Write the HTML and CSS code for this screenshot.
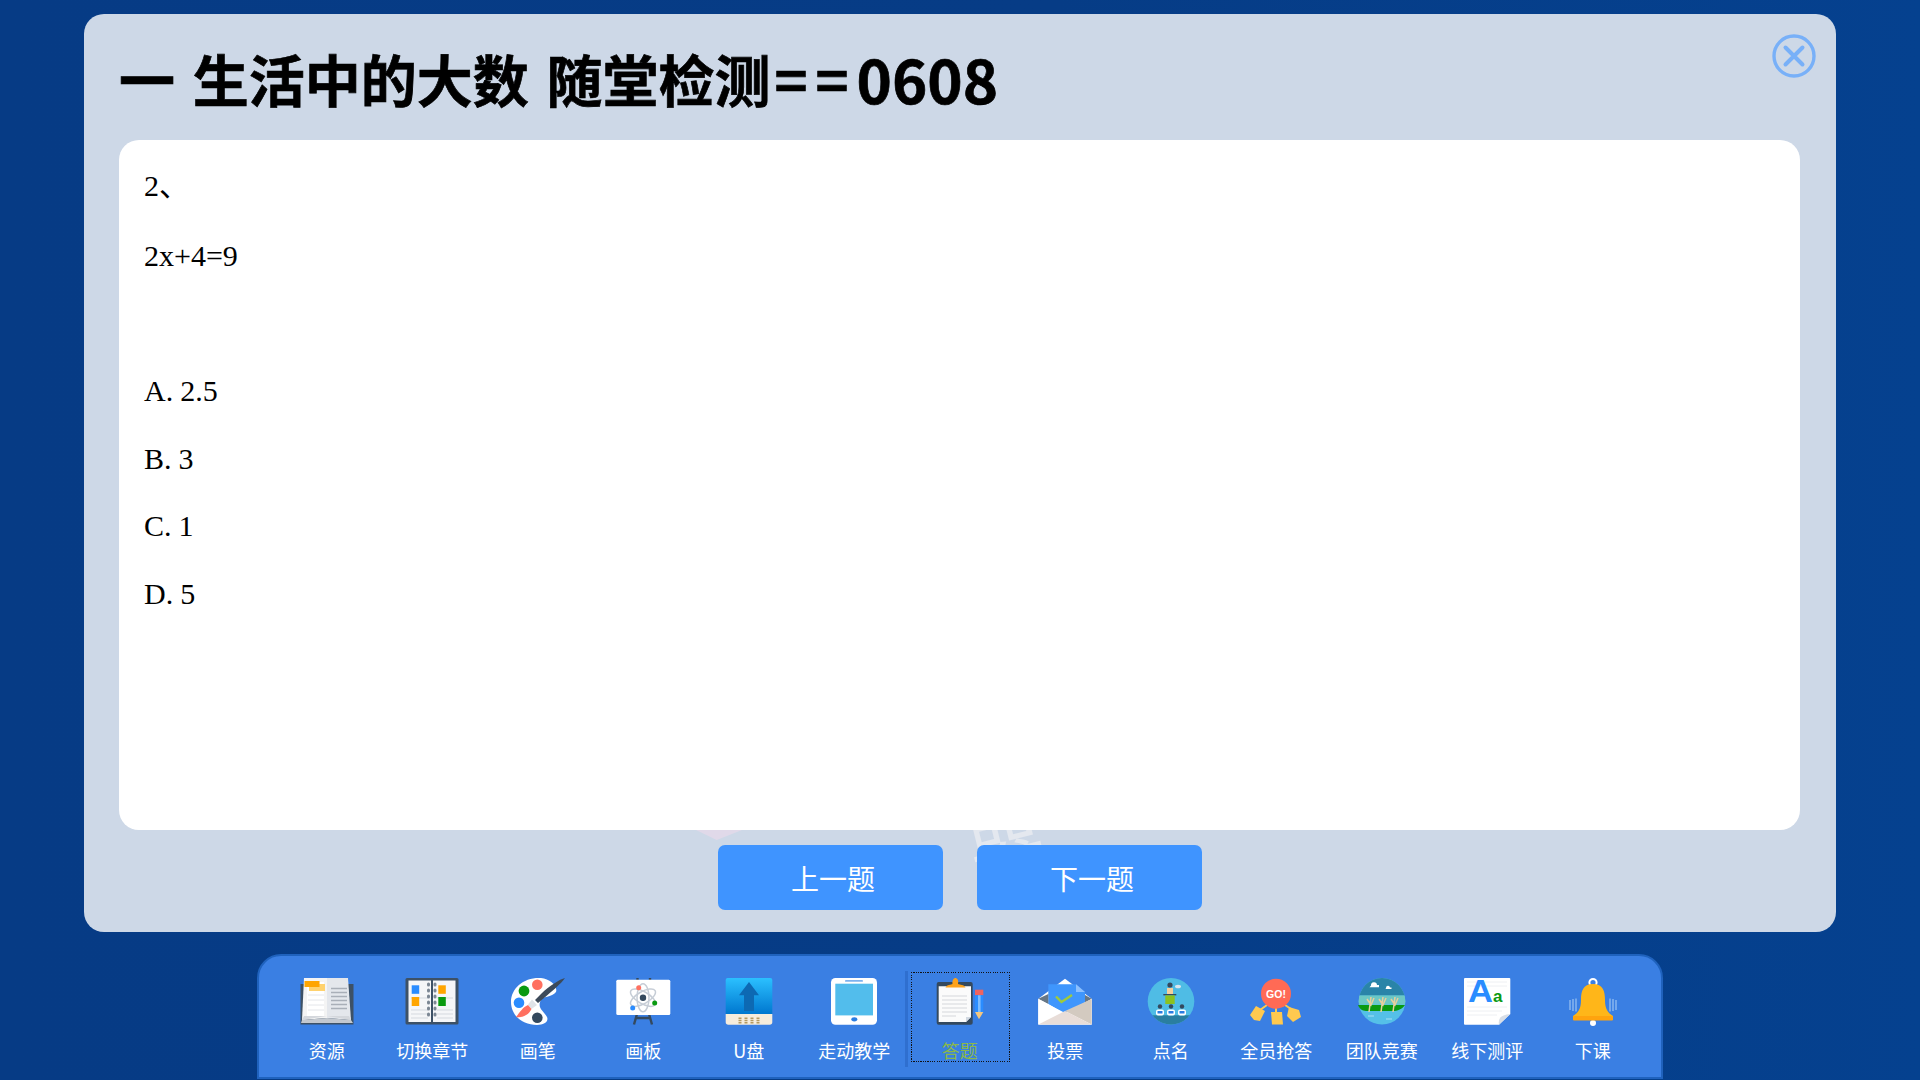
FILE: index.html
```html
<!DOCTYPE html>
<html lang="zh-CN">
<head>
<meta charset="utf-8">
<title>随堂检测</title>
<link rel="stylesheet" href="styles.css">
</head>
<body>
<div class="stage">
  <section class="panel">
    <div class="watermark wm-a"></div>
    <div class="watermark wm-b">器</div>
    <svg class="close" viewBox="0 0 44 44" width="44" height="44"><circle cx="22" cy="22" r="20" fill="none" stroke="#78b0f8" stroke-width="3.400"/><path d="M13.500 13.500 30.500 30.500M30.500 13.500 13.500 30.500" stroke="#78b0f8" stroke-width="4" stroke-linecap="round"/></svg>
    <h1 class="title">一 生活中的大数 随堂检测<span class="eq">==</span><span class="num">0608</span></h1>
    <div class="card">
      <p class="line first">2、</p>
      <p class="line">2x+4=9</p>
      <p class="line blank"></p>
      <p class="line">A. 2.5</p>
      <p class="line">B. 3</p>
      <p class="line">C. 1</p>
      <p class="line">D. 5</p>
    </div>
    <div class="pager">
      <button class="btn">上一题</button>
      <button class="btn">下一题</button>
    </div>
  </section>

  <nav class="toolbar">
    <div class="tool">
      <svg class="ico" viewBox="0 0 60 48"><path d="M3.500 6H56.500V46.500H3.500Z" fill="#3d5166"/><path d="M7 0H30V40L5 42Z" fill="#f4f4f4"/><path d="M30 0H51L54 42 30 40Z" fill="#e4e7ec"/><path d="M5 42 30 40 54 42 56 45H4Z" fill="#c3c8cf"/><path d="M30 38 5 42 7 38ZM30 38 54 42 52 38Z" fill="#d4d7dc"/><rect x="10" y="4" width="17" height="34" fill="#fff"/><path d="M34 10.500H50M34 14.500H50M34 18.500H50M34 22.500H50M34 26.500H50M34 30.500H50" stroke="#a9afb8" stroke-width="1.300"/><path d="M11 17H27M11 22H27M11 27H27M11 32H27" stroke="#e4e6ea" stroke-width="1"/><rect x="12" y="6" width="16" height="7" fill="#ffd26e"/><rect x="7.500" y="3" width="15" height="6" fill="#ffa500"/></svg>
      <span class="lbl">资源</span>
    </div>
    <div class="tool">
      <svg class="ico" viewBox="0 0 60 48"><rect x="3.500" y="0" width="53" height="46.500" rx="1.500" fill="#3d5166"/><rect x="6.500" y="2.500" width="47" height="41.500" fill="#f5f6f8"/><path d="M9 20H26M9 32H26M9 36H26M9 40H26M35 20H51M35 32H51M35 36H51M35 40H51" stroke="#d5d9df" stroke-width="1"/><rect x="9.700" y="7.300" width="7.500" height="8.500" fill="#2a8cff"/><rect x="9.700" y="19" width="7.500" height="9" fill="#ffa500"/><rect x="36.300" y="7.300" width="7.500" height="8.500" fill="#ffa500"/><rect x="36.300" y="19" width="7.500" height="9" fill="#0a9a10"/><rect x="29" y="1" width="2" height="45" fill="#3d5166"/><path d="M26.500 6v1M33 6v1M26.500 12v1M33 12v1M26.500 18v1M33 18v1M26.500 24v1M33 24v1M26.500 30v1M33 30v1M26.500 36v1M33 36v1" stroke="#7c8794" stroke-width="3" stroke-linecap="round"/></svg>
      <span class="lbl">切换章节</span>
    </div>
    <div class="tool">
      <svg class="ico" viewBox="0 0 60 48"><path d="M33 0C16 -1 3 10 3 24 3 37 14 47 29 47 36 47 41 44 39 39 36 33 30 31 32 24 34 17 44 20 48 14 50 8 42 1 33 0Z" fill="#fff"/><circle cx="29.300" cy="6.700" r="5.300" fill="#ff7060"/><circle cx="16" cy="13" r="5.400" fill="#0a9a10"/><circle cx="11" cy="24.700" r="5.300" fill="#2a8cff"/><circle cx="29.300" cy="39.700" r="5.300" fill="#34495e"/><path d="M57 0C52 1 41 8 33 16L27 22 30 25 36 20C44 13 53 6 57 0Z" fill="#3c4a5a"/><path d="M24 21.500 29 27 23.500 31 20 26.500Z" fill="#dfe3e8"/><path d="M20 27C15 29 12 34 8 39 14 40 21 37 23.500 31Z" fill="#ff7060"/></svg>
      <span class="lbl">画笔</span>
    </div>
    <div class="tool">
      <svg class="ico" viewBox="0 0 60 48"><path d="M24.500 0v3M37 0v3M24 36 21 46.500M36 36 39 46.500M23 40H37" stroke="#34495e" stroke-width="2.400" fill="none"/><rect x="3.300" y="1.700" width="54" height="35.300" rx="1.500" fill="#fff"/><g fill="none" stroke="#c6cdd6" stroke-width="1.500"><ellipse cx="30" cy="19.700" rx="6" ry="14"/><ellipse cx="30" cy="19.700" rx="6" ry="14" transform="rotate(60 30 19.700)"/><ellipse cx="30" cy="19.700" rx="6" ry="14" transform="rotate(-60 30 19.700)"/></g><circle cx="30" cy="19.700" r="3.200" fill="#34495e"/><circle cx="25.700" cy="9.700" r="2.500" fill="#ff7060"/><circle cx="41.700" cy="25" r="2.500" fill="#0a9a10"/><circle cx="19.700" cy="30" r="2.500" fill="#2a8cff"/></svg>
      <span class="lbl">画板</span>
    </div>
    <div class="tool">
      <svg class="ico" viewBox="0 0 60 48"><defs><linearGradient id="u" x1="0" y1="0" x2="0" y2="1"><stop offset="0" stop-color="#2bc0ff"/><stop offset="1" stop-color="#0077cf"/></linearGradient></defs><path d="M8.700 0H51.300A2 2 0 0 1 53.300 2V36H6.700V2A2 2 0 0 1 8.700 0Z" fill="url(#u)"/><path d="M6.700 36H53.300V44A2.700 2.700 0 0 1 50.600 46.700H9.400A2.700 2.700 0 0 1 6.700 44Z" fill="#f6ecdc"/><path d="M30 4 20 17.300H25V33H35V17.300H40Z" fill="#0d69b3"/><path d="M21 39.500v6M27 39.500v6M33 39.500v6M39 39.500v6" stroke="#b49a62" stroke-width="3" stroke-dasharray="1.500 .8"/></svg>
      <span class="lbl">U盘</span>
    </div>
    <div class="tool">
      <svg class="ico" viewBox="0 0 60 48"><rect x="7" y="0" width="46" height="46.700" rx="4.500" fill="#fff"/><rect x="11.300" y="5.700" width="37.700" height="31.700" fill="#52bdec"/><rect x="21" y="2" width="18" height="1.800" rx=".9" fill="#7db2ee"/><ellipse cx="30.300" cy="41.300" rx="3" ry="2.100" fill="#2a7de1"/></svg>
      <span class="lbl">走动教学</span>
    </div>
    <div class="divider"></div>
    <div class="tool active">
      <svg class="ico" viewBox="0 0 60 48"><rect x="6.700" y="4" width="36" height="42.700" rx="2" fill="#34495e"/><path d="M8.700 8.300H41V39L36 44H8.700Z" fill="#fbfbfb"/><path d="M36 44 41 39H36Z" fill="#d2d9e2"/><path d="M12 18H37M12 22H37M12 26H37M12 30H37M12 34H37M12 38H26" stroke="#d5d8dc" stroke-width="1.200"/><path d="M15.500 9.500C17 6.500 21 7 22.500 6 22 2 24 0 25.300 0 27 0 29 2 28 6 30 7 34 6.500 35.500 9.500Z" fill="#ffa21a"/><rect x="45" y="11.700" width="8.300" height="5.600" fill="#f0635f"/><rect x="45" y="17.300" width="8.300" height="16.700" fill="#2a8cff"/><rect x="48" y="17.300" width="2.600" height="16.700" fill="#7dbcff"/><path d="M45 34H53.300L49 41.300Z" fill="#f5c77e"/></svg>
      <span class="lbl">答题</span>
    </div>
    <div class="tool">
      <svg class="ico" viewBox="0 0 60 48"><path d="M3.300 20.700 30 .7 56.700 20.700V46.500H3.300Z" fill="#fff"/><path d="M13.300 6.300H41L50 14V26L30 36 13.300 26Z" fill="#3f96fd"/><path d="M41 6.300 50 14H41Z" fill="#8dc0fd"/><path d="M3.300 20.700 13.300 16V26ZM56.700 20.700 50 17V25Z" fill="#34495e" opacity=".75"/><path d="M3.300 21 30 35 56.700 21V46.500H3.300Z" fill="#fff"/><path d="M30 33 56.700 21V46.500Z" fill="#d3cac0"/><path d="M3.300 46.500 30 33 56.700 46.500Z" fill="#e8ddd8"/><path d="M21 18.500 26.500 24 37 17" fill="none" stroke="#9fcb3a" stroke-width="2.400"/></svg>
      <span class="lbl">投票</span>
    </div>
    <div class="tool">
      <svg class="ico" viewBox="0 0 60 48"><defs><clipPath id="c1"><circle cx="30" cy="23.300" r="23.300"/></clipPath></defs><circle cx="30" cy="23.300" r="23.300" fill="#4fbce5"/><rect x="6" y="37.300" width="48" height="10" fill="#2a7ea0" clip-path="url(#c1)"/><ellipse cx="37" cy="8.500" rx="3" ry="1.800" fill="#dbe6ee"/><circle cx="29" cy="7" r="2.600" fill="#34495e"/><path d="M26 10H32V17H26Z" fill="#f4cf9c"/><rect x="22.300" y="16" width="13" height="1.400" fill="#34495e"/><path d="M24.300 17.400H33.700V26H24.300Z" fill="#8cc21f"/><g fill="#34495e"><circle cx="19" cy="28.500" r="2.200"/><circle cx="30" cy="28.500" r="2.200"/><circle cx="41" cy="28.500" r="2.200"/></g><g fill="#fff"><rect x="15" y="31.500" width="8" height="6" rx="2"/><rect x="26" y="31.500" width="8" height="6" rx="2"/><rect x="37" y="31.500" width="8" height="6" rx="2"/></g><g fill="#2a7de1"><rect x="16.500" y="33" width="5" height="2.500"/><rect x="27.500" y="33" width="5" height="2.500"/><rect x="38.500" y="33" width="5" height="2.500"/></g></svg>
      <span class="lbl">点名</span>
    </div>
    <div class="tool">
      <svg class="ico" viewBox="0 0 60 48"><path d="M21 27 14 32M30 28V35M39 27 45 31" stroke="#ffc94f" stroke-width="2"/><circle cx="30" cy="15.700" r="15" fill="#ff6a55"/><text class="go" x="30" y="19.500" text-anchor="middle">GO!</text><g fill="#ffc94f"><path d="M10 28 19 33 14 43 8 42 4 37Z"/><path d="M25 34H36L37 46.500H26Z"/><path d="M43 29 53 32 55 39 47 44 41 38Z"/></g></svg>
      <span class="lbl">全员抢答</span>
    </div>
    <div class="tool">
      <svg class="ico" viewBox="0 0 60 48"><defs><clipPath id="c2"><circle cx="30" cy="23.300" r="23.300"/></clipPath></defs><circle cx="30" cy="23.300" r="23.300" fill="#55c0e8"/><rect x="6" y="0" width="48" height="17.500" fill="#2a84a8" clip-path="url(#c2)"/><rect x="6" y="17.500" width="48" height="9" fill="#6cc8c4" clip-path="url(#c2)"/><path d="M19 7.500a2 2 0 0 1 6-.5h2v2.200H17.500ZM34 10a1.500 1.500 0 0 1 4-.5h1.500v1.500h-6Z" fill="#fff"/><path d="M6 27 53 27C50 31 46 33 40 33H14C10 33 7 30 6 27Z" fill="#0a9a10"/><path d="M19 19 17 34M15 21 19 27 22 20M31 19 29 34M27 21 31 27 34 20M43 19 41 34M39 21 43 27 46 20" stroke="#e9cf9c" stroke-width="1.500" fill="none"/><path d="M16 38H22M34 41H40" stroke="#a8e0f5" stroke-width="1"/></svg>
      <span class="lbl">团队竞赛</span>
    </div>
    <div class="tool">
      <svg class="ico" viewBox="0 0 60 48"><path d="M8 0H52.300A1 1 0 0 1 53.300 1V36L42 46.700H8A1 1 0 0 1 7 45.700V1A1 1 0 0 1 8 0Z" fill="#fff"/><path d="M10 4H50M10 8H50M10 29H50M10 33H45M10 37H40" stroke="#eef0f3" stroke-width="1"/><path d="M53.300 36 42 46.700C41 41 43 37 53.300 36Z" fill="#d8dee6"/><text class="aa-big" x="11" y="23.500" textLength="25" lengthAdjust="spacingAndGlyphs">A</text><text class="aa-small" x="36" y="23.500">a</text></svg>
      <span class="lbl">线下测评</span>
    </div>
    <div class="tool">
      <svg class="ico" viewBox="0 0 60 48"><path d="M7 22v10M10 21v12M13 20.500v13M47 20.500v13M50 21v12M53 22v10" stroke="#9cc4f2" stroke-width="1.200"/><circle cx="30" cy="45" r="3" fill="#fff"/><circle cx="30" cy="4.500" r="3.600" fill="none" stroke="#fff" stroke-width="2"/><path d="M30 6C20 6 18 13 18 22 18 31 15 35 10 38V42H50V38C45 35 42 31 42 22 42 13 40 6 30 6Z" fill="#ffb619"/><rect x="10" y="38" width="40" height="4.500" rx="1" fill="#ffa30e"/></svg>
      <span class="lbl">下课</span>
    </div>
  </nav>
</div>
</body>
</html>
```
FILE: styles.css
```css
* { box-sizing: border-box; }
html, body { margin: 0; height: 100%; }
body {
  overflow: hidden;
  background: linear-gradient(90deg, #063b85 0%, #063c86 55%, #05418f 100%);
  font-family: "Noto Sans CJK SC", "Noto Sans", sans-serif;
}
.stage {
  height: 1080px;
  padding-top: 14px;
  display: flex;
  flex-direction: column;
  align-items: center;
}
.panel {
  position: relative;
  flex: none;
  width: 1752px;
  height: 918px;
  padding: 0 36px 0 35px;
  background: #cdd8e7;
  border-radius: 20px;
  overflow: hidden;
}
.close { position: absolute; top: 20px; right: 20px; }
.title {
  margin: 0;
  height: 126px;
  display: flex;
  align-items: center;
  padding-top: 1px;
  font-size: 56px;
  font-weight: 700;
  color: #000;
  white-space: pre;
  word-spacing: 5px;
  -webkit-text-stroke: 0.7px #000;
}
.eq { letter-spacing: 8px; margin-left: 4px; }
.num { font-size: 60px; }
.card {
  position: relative;
  height: 690px;
  padding: 29px 25px;
  background: #fff;
  border-radius: 20px;
  font-family: "Liberation Serif", "Noto Sans CJK SC", serif;
  font-size: 30px;
  word-spacing: -0.500px;
  color: #000;
}
.line {
  margin: 0 0 33.700px;
  height: 34px;
  line-height: 34px;
}
.first { margin-bottom: 35.500px; }
.pager {
  position: relative;
  margin-top: 15px;
  display: flex;
  justify-content: center;
  gap: 34px;
}
.btn {
  width: 225px;
  height: 65px;
  padding: 0 0 0 6px;
  border: 0;
  border-radius: 7px;
  background: #3f94ff;
  color: #fff;
  font-family: inherit;
  font-size: 28px;
}
.watermark { position: absolute; }
.wm-a {
  left: 612px;
  top: 816px;
  width: 46px;
  height: 10px;
  background: #e0d9e9;
  clip-path: polygon(0 0, 100% 0, 45% 100%);
}
.wm-b {
  left: 885px;
  top: 796px;
  font-size: 76px;
  line-height: 1;
  color: #e4e8ef;
  transform: rotate(-14deg);
}
.toolbar {
  flex: none;
  margin-top: 22px;
  width: 1406px;
  height: 125px;
  padding: 22px 0 0 15px;
  display: flex;
  align-items: flex-start;
  background: #3a7fe3;
  border: 2px solid #1f62bd;
  border-radius: 24px 24px 0 0;
}
.tool {
  position: relative;
  flex: none;
  width: 105.500px;
  display: flex;
  flex-direction: column;
  align-items: center;
}
.ico { width: 60px; height: 48px; display: block; overflow: visible; }
.lbl {
  margin-top: 11.500px;
  height: 24px;
  line-height: 24px;
  font-size: 18px;
  color: #fff;
  white-space: nowrap;
}
.divider {
  flex: none;
  width: 3px;
  height: 96px;
  margin: -7px -1px 0 -2px;
  background: #2f6fcf;
}
.active .lbl { color: #8ab84a; }
.active::after {
  content: "";
  position: absolute;
  left: 4px;
  top: -6px;
  width: 99px;
  height: 90px;
  background:
    repeating-linear-gradient(90deg, #111 0 1.200px, transparent 1.200px 2.330px) left top / 100% 1.400px no-repeat,
    repeating-linear-gradient(90deg, #111 0 1.200px, transparent 1.200px 2.330px) left bottom / 100% 1.400px no-repeat,
    repeating-linear-gradient(0deg, #111 0 1.200px, transparent 1.200px 2.330px) left top / 1.400px 100% no-repeat,
    repeating-linear-gradient(0deg, #111 0 1.200px, transparent 1.200px 2.330px) right top / 1.400px 100% no-repeat;
}
.go { font: 700 10.500px "Liberation Sans", sans-serif; fill: #fff; }
.aa-big { font: 700 31px "Liberation Sans", sans-serif; fill: #2a8cff; }
.aa-small { font: 700 17px "Liberation Sans", sans-serif; fill: #0a9a10; }
```
